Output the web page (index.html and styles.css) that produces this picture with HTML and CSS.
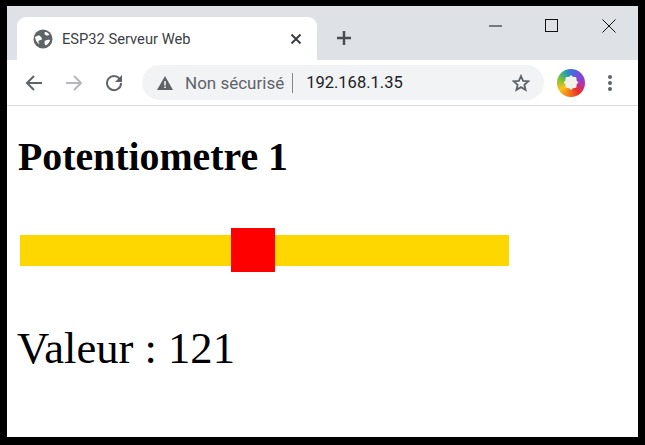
FILE: index.html
```html
<!DOCTYPE html>
<html lang="fr">
<head>
  <meta charset="UTF-8">
  <title>ESP32 Serveur Web</title>
  <link rel="stylesheet" href="styles.css">
</head>
<body>
  <div class="window">
    <div class="tabstrip">
      <div class="tab">
        <svg class="favicon" viewBox="0 0 20 20" width="20" height="20">
          <circle cx="10" cy="10" r="9.500" fill="#5f6368"/>
          <path d="M2 8c2-1 4-2 5-1s2 2 2 3-2 1-3 1.500-.5 2 .5 3.500c-2-.5-4-3.500-4.500-7zM13 3c1.500.5 3 2 3.500 3-1 .5-2.500.5-3.500.2s-1.500-1-1.500-2 .5-1.200 1.500-1.200zM12.500 11.500c1.500-.8 3-.8 4.500-.5-.5 2.500-2 4.500-4.500 5.500-.8-1-1-2-1-3s.2-1.500 1-2z" fill="#fff"/>
        </svg>
        <span class="tab-title">ESP32 Serveur Web</span>
        <svg class="tab-close" viewBox="0 0 12 12" width="12" height="12">
          <path d="M1.500 1.500l9 9M10.500 1.500l-9 9" stroke="#3c4043" stroke-width="2" fill="none"/>
        </svg>
      </div>
      <svg class="new-tab" viewBox="0 0 14 14" width="14" height="14">
        <path d="M7 0v14M0 7h14" stroke="#4a4d51" stroke-width="2.500" fill="none"/>
      </svg>
      <div class="window-controls">
        <svg class="minimize" viewBox="0 0 14 14" width="14" height="14"><path d="M0 7h13" stroke="#111" stroke-width="1" fill="none"/></svg>
        <svg viewBox="0 0 14 14" width="14" height="14"><rect x="1.500" y="0.500" width="12" height="12" stroke="#111" fill="none"/></svg>
        <svg viewBox="0 0 14 14" width="14" height="14"><path d="M0.500 0.500l13 13M13.500 0.500l-13 13" stroke="#111" fill="none"/></svg>
      </div>
    </div>

    <div class="toolbar">
      <svg class="nav-icon" viewBox="0 0 18 18" width="18" height="18">
        <path d="M17 9H2M9 2L2 9l7 7" stroke="#5f6368" stroke-width="2" fill="none"/>
      </svg>
      <svg class="nav-icon" viewBox="0 0 18 18" width="18" height="18">
        <path d="M1 9h15M9 2l7 7-7 7" stroke="#b6b8bb" stroke-width="2" fill="none"/>
      </svg>
      <svg class="nav-icon" viewBox="0 0 18 18" width="18" height="18">
        <path d="M15 5.500A7 7 0 1 0 16 9" stroke="#5f6368" stroke-width="2" fill="none"/>
        <path d="M17 1v7h-7z" fill="#5f6368"/>
      </svg>
      <div class="omnibox">
        <svg viewBox="0 0 16 14" width="16" height="14">
          <path d="M8 0l8 14H0z" fill="#5f6368"/>
          <path d="M7.200 5h1.600v4.500H7.200zM7.200 10.500h1.600V12H7.200z" fill="#f1f3f4"/>
        </svg>
        <span class="not-secure">Non sécurisé</span>
        <span class="divider"></span>
        <span class="address">192.168.1.35</span>
        <svg class="star" viewBox="0 0 18 18" width="18" height="18">
          <path d="M9 2l2.100 4.800 5.200.5-3.900 3.400 1.200 5.100L9 13.100l-4.600 2.700 1.200-5.100-3.900-3.400 5.200-.5z" stroke="#5f6368" stroke-width="1.800" fill="none"/>
        </svg>
      </div>
      <div class="avatar"></div>
      <div class="menu-dots"><i></i><i></i><i></i></div>
    </div>

    <div class="page">
      <h1>Potentiometre 1</h1>
      <div class="slider">
        <div class="thumb"></div>
      </div>
      <p class="value">Valeur : 121</p>
    </div>
  </div>
</body>
</html>
```

FILE: styles.css
```css
html, body {
  margin: 0;
  padding: 0;
  background: #000;
}
body {
  height: 445px;
  overflow: hidden;
}
.window {
  margin: 6px 7px 0;
  height: 431px;
  background: #fff;
  display: flex;
  flex-direction: column;
}
.tabstrip {
  height: 54px;
  background: #dee1e6;
  display: flex;
  align-items: flex-end;
  padding-left: 10px;
  box-sizing: border-box;
}
.tab {
  width: 300px;
  height: 43px;
  box-sizing: border-box;
  background: #fff;
  border-radius: 9px 9px 0 0;
  display: flex;
  align-items: center;
  padding: 0 15px 0 16px;
}
.tab-title {
  font-family: "Roboto", "Open Sans", sans-serif;
  font-size: 14.700px;
  color: #3c4043;
  margin-left: 9px;
  flex: 1;
}
.new-tab {
  margin: 0 0 15px 20px;
}
.window-controls {
  margin-left: auto;
  align-self: flex-start;
  display: flex;
  gap: 44px;
  padding: 13px 22px 0 0;
}
.minimize {
  margin-right: -3px;
}
.toolbar {
  height: 46px;
  box-sizing: border-box;
  border-bottom: 1px solid #dadce0;
  display: flex;
  align-items: center;
  padding: 0 20px 0 18px;
  background: #fff;
}
.nav-icon {
  margin-right: 22px;
}
.nav-icon:nth-child(3) {
  margin-right: 19px;
}
.omnibox {
  width: 402px;
  height: 35px;
  box-sizing: border-box;
  background: #f1f3f4;
  border-radius: 18px;
  display: flex;
  align-items: center;
  padding: 0 14px 0 15px;
  margin-right: 13px;
}
.not-secure {
  font-family: "Roboto", "Open Sans", sans-serif;
  font-size: 17px;
  color: #5f6368;
  margin-left: 12px;
}
.divider {
  width: 1px;
  height: 20px;
  background: #80868b;
  margin: 0 13px 0 8px;
}
.address {
  font-family: "Roboto", "Open Sans", sans-serif;
  font-size: 16.500px;
  color: #202124;
  flex: 1;
}
.avatar {
  width: 28px;
  height: 28px;
  box-sizing: border-box;
  border-radius: 50%;
  background: conic-gradient(#3f6fe0 0deg, #8e3fd0 70deg, #c02fa0 100deg, #e8302a 140deg, #f47a1c 190deg, #f6c21c 240deg, #7cc03a 290deg, #27a5a0 330deg, #3f6fe0 360deg);
  display: flex;
  align-items: center;
  justify-content: center;
}
.avatar::after {
  content: "";
  width: 15px;
  height: 15px;
  background: #f4f0ea;
  clip-path: polygon(50% 0, 62% 12%, 85% 15%, 88% 38%, 100% 50%, 88% 62%, 85% 85%, 62% 88%, 50% 100%, 38% 88%, 15% 85%, 12% 62%, 0 50%, 12% 38%, 15% 15%, 38% 12%);
}
.menu-dots {
  margin-left: 23px;
  display: flex;
  flex-direction: column;
  gap: 2px;
}
.menu-dots i {
  width: 4px;
  height: 4px;
  border-radius: 50%;
  background: #5f6368;
}
.page {
  flex: 1;
  padding: 0 11px;
  font-family: "Liberation Serif", serif;
  color: #000;
}
h1 {
  font-size: 39.800px;
  line-height: 46px;
  margin: 28px 0 0;
}
.slider {
  position: relative;
  width: 489px;
  height: 31px;
  margin: 55px 0 0 2px;
  background: #ffd700;
}
.thumb {
  position: absolute;
  left: 211px;
  top: -7px;
  width: 44px;
  height: 44px;
  background: #f00;
}
.value {
  font-size: 44.600px;
  line-height: 55px;
  margin: 55px 0 0 -1px;
}
```
